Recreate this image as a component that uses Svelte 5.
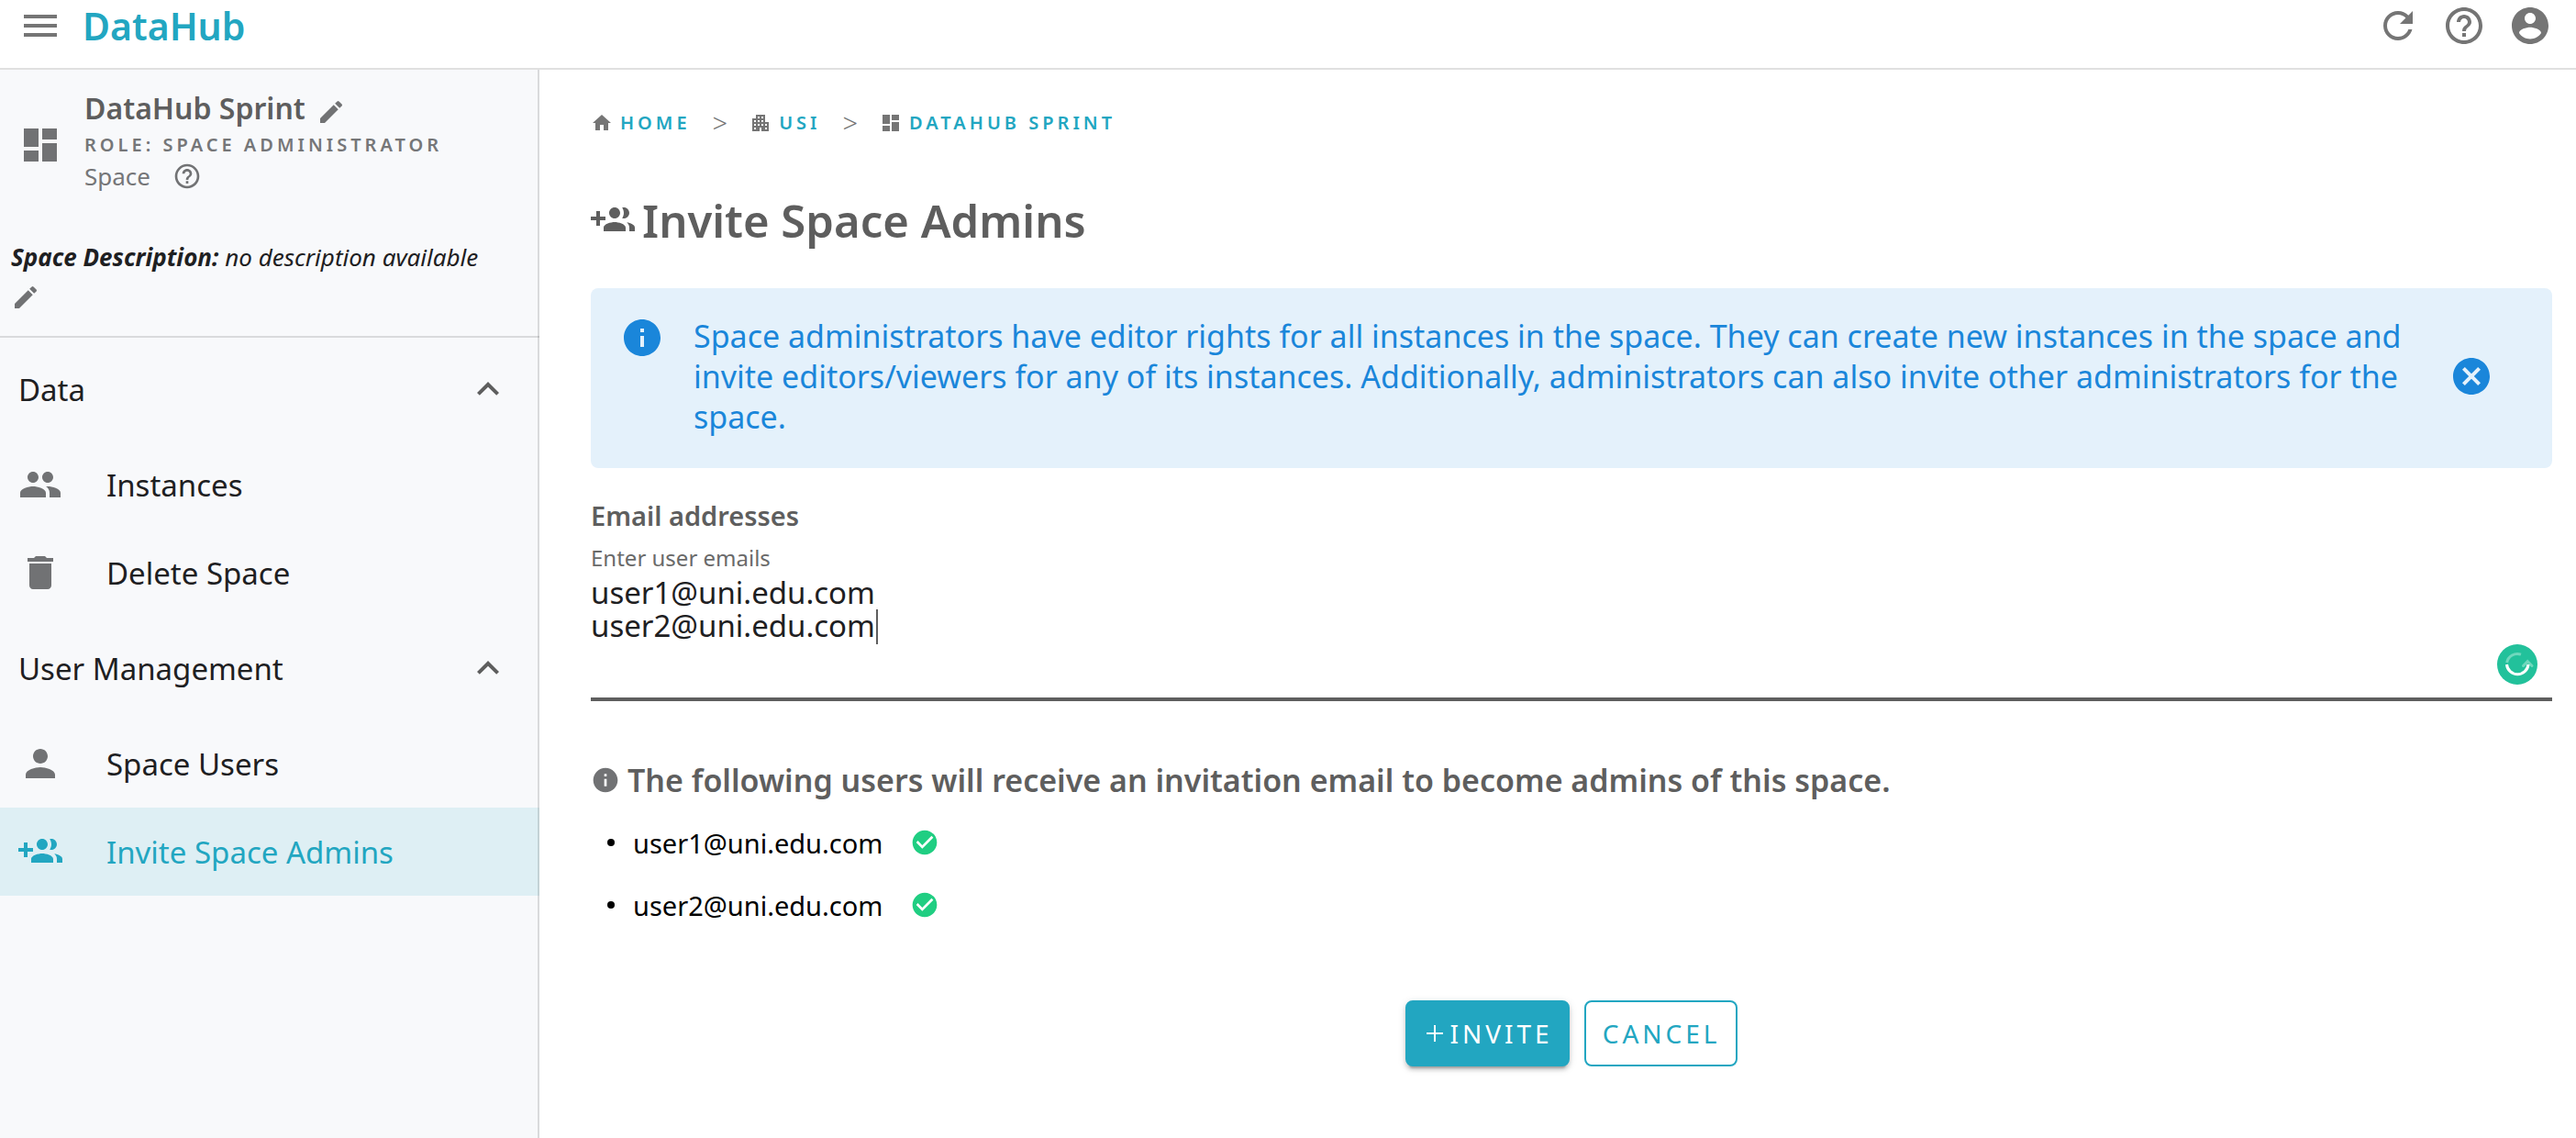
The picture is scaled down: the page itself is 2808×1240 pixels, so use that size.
<script>
  const icons = {
    menu: 'M3 18h18v-2H3v2zm0-5h18v-2H3v2zm0-7v2h18V6H3z',
    refresh: 'M17.65 6.35C16.2 4.9 14.21 4 12 4c-4.42 0-7.99 3.58-7.99 8s3.57 8 7.99 8c3.73 0 6.84-2.55 7.73-6h-2.08c-.82 2.33-3.04 4-5.65 4-3.31 0-6-2.69-6-6s2.69-6 6-6c1.66 0 3.14.69 4.22 1.78L13 11h7V4l-2.35 2.35z',
    help: 'M11 18h2v-2h-2v2zm1-16C6.48 2 2 6.48 2 12s4.48 10 10 10 10-4.48 10-10S17.52 2 12 2zm0 18c-4.41 0-8-3.59-8-8s3.59-8 8-8 8 3.59 8 8-3.59 8-8 8zm0-14c-2.21 0-4 1.79-4 4h2c0-1.1.9-2 2-2s2 .9 2 2c0 2-3 1.75-3 5h2c0-2.25 3-2.5 3-5 0-2.21-1.79-4-4-4z',
    account: 'M12 2C6.48 2 2 6.48 2 12s4.48 10 10 10 10-4.48 10-10S17.52 2 12 2zm0 3c1.66 0 3 1.34 3 3s-1.34 3-3 3-3-1.34-3-3 1.34-3 3-3zm0 14.2c-2.5 0-4.71-1.28-6-3.22.03-1.99 4-3.08 6-3.08 1.99 0 5.97 1.09 6 3.08-1.29 1.94-3.5 3.22-6 3.22z',
    dashboard: 'M3 13h8V3H3v10zm0 8h8v-6H3v6zm10 0h8V11h-8v10zm0-18v6h8V3h-8z',
    edit: 'M3 17.25V21h3.75L17.81 9.94l-3.75-3.75L3 17.25zM20.71 7.04c.39-.39.39-1.02 0-1.41l-2.34-2.34a.9959.9959 0 0 0-1.41 0l-1.83 1.83 3.75 3.75 1.83-1.83z',
    expandLess: 'M12 8l-6 6 1.41 1.41L12 10.83l4.59 4.58L18 14z',
    people: 'M16 11c1.66 0 2.99-1.34 2.99-3S17.66 5 16 5s-3 1.34-3 3 1.34 3 3 3zm-8 0c1.66 0 2.99-1.34 2.99-3S9.66 5 8 5 5 6.34 5 8s1.34 3 3 3zm0 2c-2.33 0-7 1.17-7 3.5V19h14v-2.5c0-2.33-4.67-3.5-7-3.5zm8 0c-.29 0-.62.02-.97.05 1.16.84 1.97 1.97 1.97 3.45V19h6v-2.5c0-2.33-4.67-3.5-7-3.5z',
    trash: 'M6 19c0 1.1.9 2 2 2h8c1.1 0 2-.9 2-2V7H6v12zM19 4h-3.5l-1-1h-5l-1 1H5v2h14V4z',
    person: 'M12 12c2.21 0 4-1.79 4-4s-1.79-4-4-4-4 1.79-4 4 1.79 4 4 4zm0 2c-2.67 0-8 1.34-8 4v2h16v-2c0-2.66-5.33-4-8-4z',
    groupAdd: 'M8 10H5V7H3v3H0v2h3v3h2v-3h3v-2zm10 1c1.66 0 2.99-1.34 2.99-3S19.66 5 18 5c-.32 0-.63.05-.91.14.57.81.9 1.79.9 2.86s-.34 2.04-.9 2.86c.28.09.59.14.91.14zm-5 0c1.66 0 2.99-1.34 2.99-3S14.66 5 13 5s-3 1.34-3 3 1.34 3 3 3zm6.62 2.16c.83.73 1.38 1.66 1.38 2.84v2h3v-2c0-1.54-2.37-2.49-4.38-2.84zM13 13c-2 0-6 1-6 3v2h12v-2c0-2-4-3-6-3z',
    home: 'M10 20v-6h4v6h5v-8h3L12 3 2 12h3v8z',
    building: 'M17 11V3H7v4H3v14h8v-4h2v4h8V11h-4zM7 19H5v-2h2v2zm0-4H5v-2h2v2zm0-4H5V9h2v2zm4 4H9v-2h2v2zm0-4H9V9h2v2zm0-4H9V5h2v2zm4 8h-2v-2h2v2zm0-4h-2V9h2v2zm0-4h-2V5h2v2zm4 12h-2v-2h2v2zm0-4h-2v-2h2v2z',
    info: 'M12 2C6.48 2 2 6.48 2 12s4.48 10 10 10 10-4.48 10-10S17.52 2 12 2zm1 15h-2v-6h2v6zm0-8h-2V7h2v2z',
    cancel: 'M12 2C6.47 2 2 6.47 2 12s4.47 10 10 10 10-4.47 10-10S17.53 2 12 2zm5 13.59L15.59 17 12 13.41 8.41 17 7 15.59 10.59 12 7 8.41 8.41 7 12 10.59 15.59 7 17 8.41 13.41 12 17 15.59z',
    check: 'M12 2C6.48 2 2 6.48 2 12s4.48 10 10 10 10-4.48 10-10S17.52 2 12 2zm-2 15l-5-5 1.41-1.41L10 14.17l7.59-7.59L19 8l-9 9z',
    plus: 'M3 11h8V3h2v8h8v2h-8v8h-2v-8H3z'
  };

  const sections = [
    {
      title: 'Data',
      items: [
        { label: 'Instances', icon: 'people' },
        { label: 'Delete Space', icon: 'trash' }
      ]
    },
    {
      title: 'User Management',
      items: [
        { label: 'Space Users', icon: 'person' },
        { label: 'Invite Space Admins', icon: 'groupAdd', active: true }
      ]
    }
  ];

  const crumbs = [
    { label: 'Home', icon: 'home' },
    { label: 'USI', icon: 'building' },
    { label: 'DataHub Sprint', icon: 'dashboard' }
  ];

  let open = $state([true, true]);
  let showInfo = $state(true);
  let emails = $state('user1@uni.edu.com\nuser2@uni.edu.com');
  let recipients = $derived(emails.split('\n').map((e) => e.trim()).filter(Boolean));

  // The caret sits after the last character of the last line.
  const ctx = document.createElement('canvas').getContext('2d');
  let caret = $derived.by(() => {
    const lines = emails.split('\n');
    ctx.font = '400 33px "Noto Sans"';
    return {
      left: Math.round(ctx.measureText(lines[lines.length - 1]).width) + 1,
      top: (lines.length - 1) * 36
    };
  });
</script>

{#snippet icon(name, size)}
  <svg class="icon {size}" viewBox="0 0 24 24" aria-hidden="true"><path d={icons[name]} /></svg>
{/snippet}

<div class="app">
  <header class="topbar">
    <button class="plain" aria-label="Menu">{@render icon('menu', 'lg')}</button>
    <a class="brand" href="#home">DataHub</a>
    <div class="tools">
      <button class="plain" aria-label="Refresh">{@render icon('refresh', 'lg')}</button>
      <button class="plain" aria-label="Help">{@render icon('help', 'lg')}</button>
      <button class="plain" aria-label="Account">{@render icon('account', 'lg')}</button>
    </div>
  </header>

  <div class="body">
    <aside class="sidebar">
      <div class="profile">
        <div class="avatar">{@render icon('dashboard', 'lg')}</div>
        <div>
          <div class="name">DataHub Sprint <button class="plain" aria-label="Edit name">{@render icon('edit', 'md')}</button></div>
          <div class="role">Role: Space Administrator</div>
          <div class="kind">Space <button class="plain" aria-label="About spaces">{@render icon('help', 'md')}</button></div>
        </div>
      </div>
      <div class="description">
        <p><strong>Space Description:</strong> no description available</p>
        <button class="plain edit" aria-label="Edit description">{@render icon('edit', 'md')}</button>
      </div>
      <nav>
        {#each sections as section, i}
          <button class="plain section" aria-expanded={open[i]} onclick={() => (open[i] = !open[i])}>
            <span>{section.title}</span>
            {@render icon('expandLess', 'lg')}
          </button>
          {#if open[i]}
            {#each section.items as item}
              <a class="item" class:active={item.active} href="#{item.icon}">
                {@render icon(item.icon, 'lg')}
                <span>{item.label}</span>
              </a>
            {/each}
          {/if}
        {/each}
      </nav>
    </aside>

    <main>
      <nav class="crumbs" aria-label="Breadcrumb">
        {#each crumbs as crumb, i}
          {#if i > 0}<span class="sep">&gt;</span>{/if}
          <a href="#{crumb.icon}">{@render icon(crumb.icon, 'sm')}<span>{crumb.label}</span></a>
        {/each}
      </nav>

      <h1>{@render icon('groupAdd', 'lg')}<span>Invite Space Admins</span></h1>

      {#if showInfo}
        <div class="alert" role="note">
          {@render icon('info', 'lg')}
          <p>Space administrators have editor rights for all instances in the space. They can create new instances in the space and invite editors/viewers for any of its instances. Additionally, administrators can also invite other administrators for the space.</p>
          <button class="plain" aria-label="Dismiss" onclick={() => (showInfo = false)}>{@render icon('cancel', 'lg')}</button>
        </div>
      {/if}

      <h2 class="field-title">Email addresses</h2>
      <label class="field-label" for="emails">Enter user emails</label>
      <div class="field">
        <textarea id="emails" bind:value={emails} spellcheck="false"></textarea>
        <span class="caret" style="left: {caret.left}px; top: {caret.top}px"></span>
        <svg class="checker" viewBox="0 0 44 44" aria-hidden="true">
          <circle cx="22" cy="22" r="22" fill="#22c19b" />
          <path d="M26 11.2A11.500 11.500 0 0 0 10.700 20" fill="none" stroke="#6fd8bd" stroke-width="3" />
          <path d="M28.500 23.500L33.200 18.600L38 23.500" fill="none" stroke="#6fd8bd" stroke-width="3" stroke-linecap="round" />
          <path d="M10.500 22A11.800 11.800 0 0 0 34 22" fill="none" stroke="#fff" stroke-width="3" />
        </svg>
      </div>

      <h2 class="summary">{@render icon('info', 'md')}<span>The following users will receive an invitation email to become admins of this space.</span></h2>
      <ul>
        {#each recipients as user}
          <li><span>{user}</span>{@render icon('check', 'md')}</li>
        {/each}
      </ul>

      <div class="actions">
        <button class="btn primary">{@render icon('plus', 'sm')}Invite</button>
        <button class="btn">Cancel</button>
      </div>
    </main>
  </div>
</div>

<style>
  :global(body) { background: #fff; }
  .app {
    display: flex;
    flex-direction: column;
    min-height: 100vh;
    font-family: "Noto Sans", "Open Sans", sans-serif;
    font-weight: 400;
    font-size: 33px;
    color: #1e2022;
  }
  .app, .app * { box-sizing: border-box; }
  h1, h2, p, ul { margin: 0; padding: 0; }

  .icon { display: block; flex: none; fill: #717274; }
  .sm { width: 24px; height: 24px; }
  .md { width: 32px; height: 32px; }
  .lg { width: 48px; height: 48px; }

  .plain {
    display: block;
    flex: none;
    padding: 0;
    border: 0;
    background: none;
    font: inherit;
    color: inherit;
    cursor: pointer;
  }

  .topbar {
    display: flex;
    align-items: center;
    gap: 22px;
    height: 76px;
    padding: 0 26px 18px 20px;
    border-bottom: 2px solid #e0e0e0;
  }
  .brand { font-size: 41px; line-height: 52px; font-weight: 600; color: #22a6c1; text-decoration: none; }
  .tools { display: flex; gap: 24px; margin-left: auto; }
  .tools .icon, .topbar > .plain .icon { fill: #757575; }

  .body { display: flex; flex: 1; }

  .sidebar { position: relative; flex: none; width: 588px; background: #f8f9fb; }
  .sidebar::after {
    content: "";
    position: absolute;
    inset: 0 0 0 auto;
    width: 2px;
    background: rgba(0, 0, 0, 0.12);
    pointer-events: none;
  }
  .profile { display: flex; align-items: center; gap: 24px; padding: 18px 20px 48px; }
  .avatar { padding-top: 12px; }
  .name { display: flex; align-items: center; gap: 12px; font-size: 32px; line-height: 48px; font-weight: 600; color: #5e5e5e; }
  .name .plain { padding-top: 8px; }
  .role { font-size: 20px; line-height: 32px; font-weight: 600; letter-spacing: 4px; text-transform: uppercase; color: #757678; }
  .kind { display: flex; align-items: center; gap: 24px; font-size: 26px; line-height: 36px; color: #757678; }
  .description { padding: 0 12px 20px; border-bottom: 2px solid rgba(0, 0, 0, 0.12); font-size: 26px; line-height: 44px; font-style: italic; }
  .description strong { font-weight: 700; }
  .edit { padding: 6px 0; }

  .section { display: flex; align-items: center; justify-content: space-between; width: 100%; height: 112px; padding: 0 32px 0 20px; }
  .section .icon { fill: #5e5e5e; }
  .item { display: flex; align-items: center; gap: 48px; height: 96px; padding: 0 20px; color: inherit; text-decoration: none; }
  .active { background: #deeff4; color: #22a6c1; }
  .active .icon { fill: #22a6c1; }

  main { flex: 1; min-width: 0; padding: 42px 26px 40px 56px; }

  .crumbs { display: flex; align-items: center; gap: 24px; line-height: 32px; }
  .crumbs a { display: flex; align-items: center; gap: 8px; font-size: 20px; font-weight: 600; letter-spacing: 4px; text-transform: uppercase; color: #22a6c1; text-decoration: none; }
  .crumbs .icon { fill: #757575; }
  .sep { font-size: 29px; font-weight: 300; color: #757575; }

  h1 { display: flex; align-items: center; gap: 8px; margin-top: 58px; font-size: 49px; line-height: 64px; font-weight: 600; color: #5e5e5e; }
  h1 .icon { fill: #5e5e5e; }

  .alert { display: flex; align-items: flex-start; gap: 32px; margin-top: 42px; padding: 30px 64px 34px 32px; border-radius: 8px; background: #e4f1fb; color: #1a86da; font-size: 34px; line-height: 44px; }
  .alert .icon { fill: #1a86da; }
  .alert p { flex: 1; }
  .alert .plain { align-self: center; margin-left: 16px; }

  .field-title { margin-top: 32px; font-size: 29px; line-height: 40px; font-weight: 600; color: #5e5e5e; }
  .field-label { display: block; margin-top: 8px; font-size: 24px; line-height: 36px; color: #6a6a6a; }
  .field { position: relative; margin-top: 2px; border-bottom: 4px solid #5e5e5e; }
  textarea { display: block; width: 100%; height: 132px; padding: 0; border: 0; outline: 0; resize: none; background: none; font: inherit; line-height: 36px; color: inherit; caret-color: transparent; }
  .caret { position: absolute; width: 2px; height: 38px; background: #5e5e5e; }
  .checker { position: absolute; right: 16px; bottom: 14px; width: 44px; height: 44px; }

  .summary { display: flex; align-items: center; gap: 8px; margin-top: 64px; font-size: 34px; line-height: 44px; font-weight: 600; color: #5e5e5e; }
  ul { margin-top: 12px; list-style: none; font-size: 29px; color: #000; }
  li { display: flex; align-items: center; height: 68px; padding-left: 18px; }
  li::before { content: ""; width: 8px; height: 8px; margin-right: 20px; border-radius: 50%; background: #000; }
  li .icon { margin-left: 30px; fill: #20ce82; }

  .actions { display: flex; justify-content: center; gap: 16px; margin-top: 70px; }
  .btn { display: flex; align-items: center; gap: 4px; height: 72px; padding: 0 16px 0 18px; border: 2px solid #22a6c1; border-radius: 8px; background: #fff; color: #22a6c1; font: inherit; font-size: 28px; letter-spacing: 4px; text-transform: uppercase; cursor: pointer; }
  .primary { background: #22a6c1; color: #fff; box-shadow: 0 6px 2px -4px rgba(0, 0, 0, 0.2), 0 4px 4px rgba(0, 0, 0, 0.14), 0 2px 10px rgba(0, 0, 0, 0.12); }
  .primary .icon { fill: #fff; }
</style>
